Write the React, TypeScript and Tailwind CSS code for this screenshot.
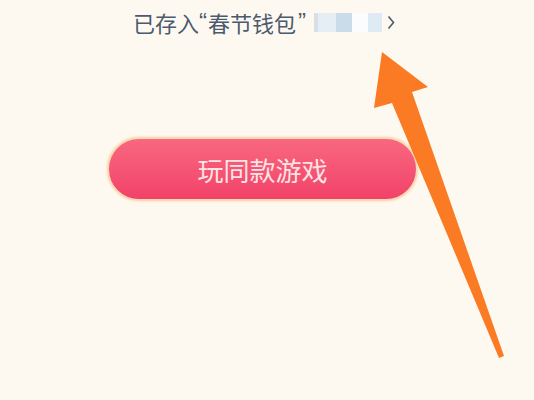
export default function App() {
  return (
    <div className="relative h-[400px] w-[534px] overflow-hidden bg-[#fef9f0] font-['Noto_Sans_CJK_SC',sans-serif]">
      <div className="flex h-[44px] items-center pl-[133px] text-[22px] leading-none text-[#4b5a6f]">
        <span>已存入</span>
        <span className="font-['Liberation_Sans','Noto_Sans_CJK_SC',sans-serif] text-[24px]">“</span>
        <span className="ml-[1px]">春节钱包</span>
        <span className="ml-[2px] font-['Liberation_Sans','Noto_Sans_CJK_SC',sans-serif] text-[24px]">”</span>
        <span className="ml-[8px] flex h-[19px] items-stretch">
          <span className="w-[4px] bg-[#d9dfe6]" />
          <span className="w-[18px] bg-[#e6eef5]" />
          <span className="w-[16px] bg-[#cadcea]" />
          <span className="w-[16px] bg-[#fbfcfd]" />
          <span className="w-[14px] bg-[#deeaf4]" />
        </span>
        <svg className="ml-[5px]" width="8" height="15" viewBox="0 0 8 15">
          <polyline points="1.5,1.5 6.5,7.5 1.5,13.5" fill="none" stroke="#4b5a6f" strokeWidth="1.6" />
        </svg>
      </div>
      <div className="mt-[93px] flex justify-start pl-[107px]">
        <button className="flex h-[64px] w-[311px] items-center justify-center rounded-full border-[2px] border-[#f9d9b4] bg-gradient-to-b from-[#f8677f] to-[#f2416a] text-[26px] text-[#fde4e4] shadow-[0_0_3px_rgba(248,200,160,0.8)]">
          玩同款游戏
        </button>
      </div>
      <svg className="absolute left-0 top-0" width="534" height="400" viewBox="0 0 534 400">
        <polygon
          points="382,52 428,87 412,92 504,356 499,358 392,103 374,108"
          fill="#fb7a24"
        />
      </svg>
    </div>
  );
}
